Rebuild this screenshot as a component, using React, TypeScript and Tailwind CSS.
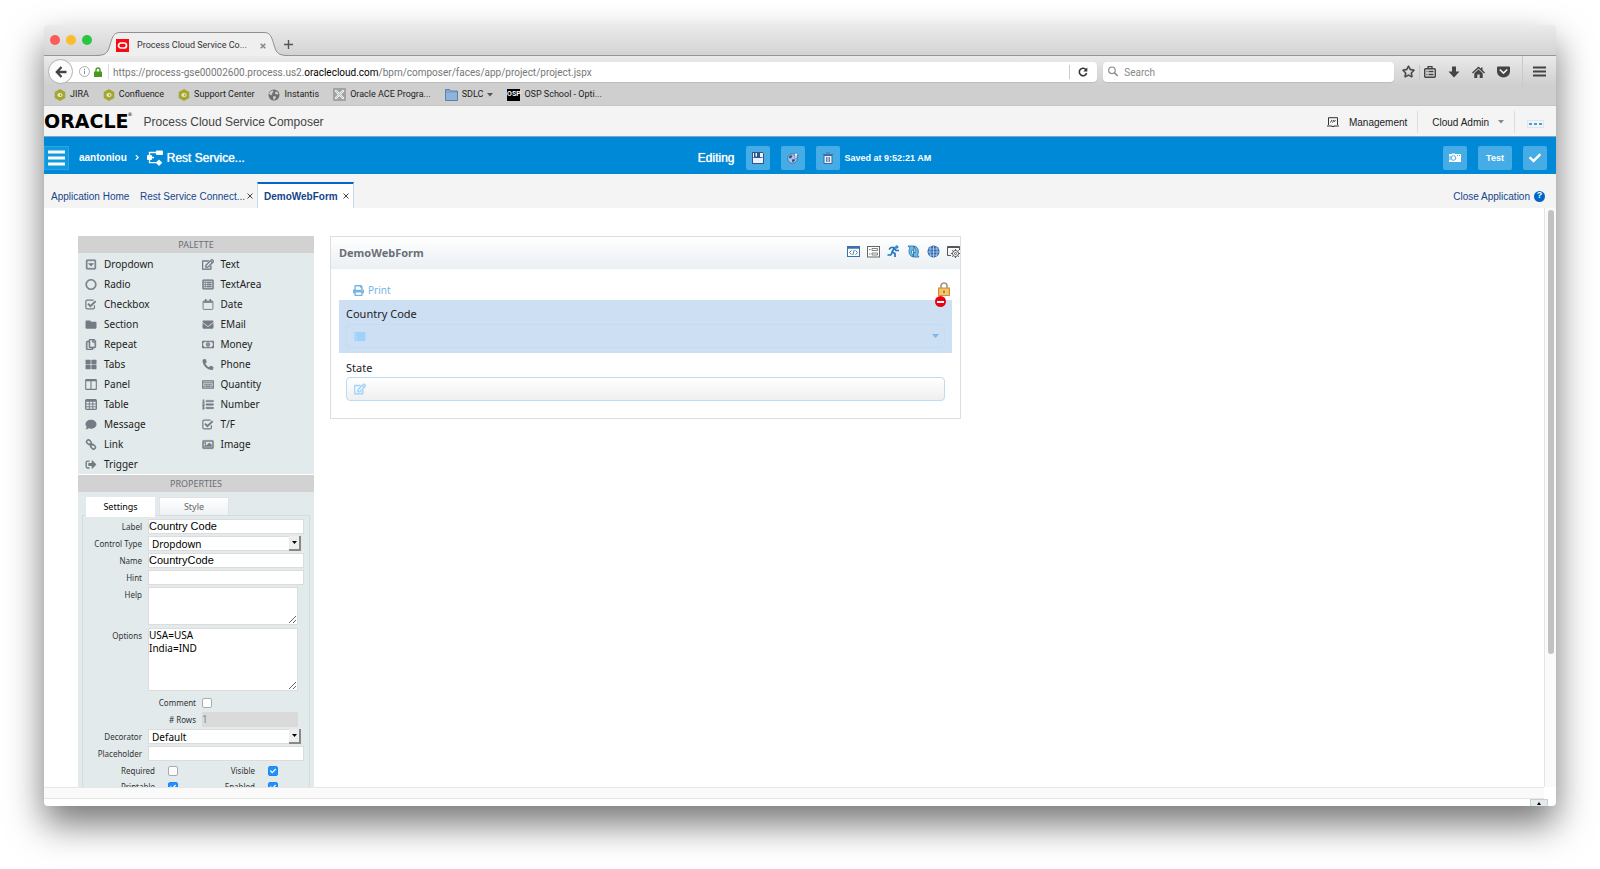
import type { ComponentType, ReactNode } from "react";
import {
  FaCheck,
  FaComment,
  FaEnvelope,
  FaFolder,
  FaListOl,
  FaPhoneAlt,
  FaPrint,
  FaRegCaretSquareDown,
  FaRegCircle,
  FaRegCopy,
  FaRegEdit,
  FaRegImage,
  FaRegKeyboard,
  FaRegListAlt,
  FaRegMoneyBillAlt,
  FaRegStar,
  FaSignOutAlt,
  FaThLarge,
} from "react-icons/fa";

type IconProps = { className?: string };

const CheckSquareIcon = ({ className }: IconProps) => (
  <svg viewBox="0 0 14 12" className={className} fill="none" stroke="currentColor">
    <path d="M11 7v2.5a1.5 1.5 0 0 1-1.500 1.500h-7A1.500 1.500 0 0 1 1 9.500v-7A1.500 1.500 0 0 1 2.500 1H10" strokeWidth="1.400" />
    <path d="M3.500 5 6.300 8 12.500 2" strokeWidth="2.200" />
  </svg>
);

const PanelIcon = ({ className }: IconProps) => (
  <svg viewBox="0 0 13 12" className={className} fill="none" stroke="currentColor">
    <rect x="0.700" y="0.700" width="11.600" height="10.600" rx="0.500" strokeWidth="1.200" />
    <path d="M1 1.700h11" strokeWidth="1.600" />
    <path d="M6.500 2v9" strokeWidth="1.200" />
  </svg>
);

const TableIcon = ({ className }: IconProps) => (
  <svg viewBox="0 0 13 12" className={className} fill="none" stroke="currentColor">
    <rect x="0.700" y="0.700" width="11.600" height="10.600" rx="1" strokeWidth="1.400" />
    <path d="M1 2h11" strokeWidth="2" />
    <path d="M1 5.500h11M1 8.500h11M4.700 2v9M8.400 2v9" />
  </svg>
);

const CalendarIcon = ({ className }: IconProps) => (
  <svg viewBox="0 0 13 13" className={className} fill="none" stroke="currentColor">
    <rect x="0.700" y="2.500" width="11.600" height="9.800" rx="0.600" strokeWidth="1.100" />
    <path d="M1 3.500h11" strokeWidth="2" />
    <path d="M3.800 0v3.500M9.200 0v3.500" strokeWidth="2" />
  </svg>
);

const ChainIcon = ({ className }: IconProps) => (
  <svg viewBox="0 0 12 12" className={className} fill="none" stroke="currentColor">
    <rect x="1" y="1.500" width="5.500" height="4" rx="2" transform="rotate(45 3.700 3.500)" strokeWidth="1.700" />
    <rect x="5.500" y="6.500" width="5.500" height="4" rx="2" transform="rotate(45 8.300 8.500)" strokeWidth="1.700" />
    <path d="m4.500 4.500 3 3" strokeWidth="1.400" />
  </svg>
);

const HexIcon = () => (
  <svg viewBox="0 0 12 12" className="size-3">
    <path d="M6 0 11.300 3v6L6 12 .7 9V3z" fill="#a3a732" />
    <ellipse cx="6" cy="6" rx="2.600" ry="2" fill="#e9ebc4" />
    <circle cx="6.600" cy="6" r="0.900" fill="#a3a732" />
  </svg>
);

const GlobeIcon = () => (
  <svg viewBox="0 0 12 12" className="size-3">
    <circle cx="6" cy="6" r="5.500" fill="#6e6e6e" />
    <path d="M1 4.500C2 2.500 3.500 1.500 5 1.500L5.500 3 4 4l.5 1L3 6.500zM7.500 2.500l2 .5 1 2-1.500.5-2-.5zM5.500 7 8 7.500 7.500 9.500 6 11 5 9z" fill="#cfcfcf" />
  </svg>
);

const CrossBoxIcon = () => (
  <svg viewBox="0 0 13 13" className="size-[13px]">
    <rect width="13" height="13" rx="1" fill="#a2a2a2" />
    <path d="m3 3 7 7M10 3l-7 7" stroke="#f2f2f2" strokeWidth="2.400" strokeLinecap="round" />
    <path d="m3 3 7 7M10 3l-7 7" stroke="#a2a2a2" strokeWidth="0.600" />
  </svg>
);

const BlueFolderIcon = () => (
  <svg viewBox="0 0 13 12" className="h-3 w-[13px]">
    <path d="M.5 11.500V.5h4l1 1.500h7v9.500z" fill="#7fa9d4" stroke="#5c7fa5" />
    <path d="M1 4h11v7H1z" fill="#8fb3da" />
  </svg>
);

const OspIcon = () => (
  <span className="flex h-3 w-[13px] items-center justify-center bg-black text-[7px] leading-none font-bold text-white">
    OSP
  </span>
);

const bookmarks: { label: string; icon: ReactNode; menu?: boolean }[] = [
  { label: "JIRA", icon: <HexIcon /> },
  { label: "Confluence", icon: <HexIcon /> },
  { label: "Support Center", icon: <HexIcon /> },
  { label: "Instantis", icon: <GlobeIcon /> },
  { label: "Oracle ACE Progra...", icon: <CrossBoxIcon /> },
  { label: "SDLC", icon: <BlueFolderIcon />, menu: true },
  { label: "OSP School - Opti...", icon: <OspIcon /> },
];

const TitleBar = () => (
  <div className="flex h-[31px] items-end border-b border-[#959595] bg-linear-to-b from-[#ebebeb] to-[#d3d3d3]">
    <div className="flex gap-1.5 self-center pl-1.5">
      <button aria-label="Close" className="size-2.5 rounded-full bg-[#fc5b57]" />
      <button aria-label="Minimise" className="size-2.5 rounded-full bg-[#fdbb2e]" />
      <button aria-label="Zoom" className="size-2.5 rounded-full bg-[#27c83f]" />
    </div>
    <div className="relative -mb-px ml-1 h-6 w-48">
      <svg viewBox="0 0 192 24" preserveAspectRatio="none" className="absolute inset-0 h-full w-full">
        <path d="M0 23.500c12 0 12-4 15-14C17.500 2 19 .5 25 .5h142c6 0 7.500 1.500 10 9 3 10 3 14 15 14V24H0z" fill="#efefef" />
        <path d="M0 23.500c12 0 12-4 15-14C17.500 2 19 .5 25 .5h142c6 0 7.500 1.500 10 9 3 10 3 14 15 14" fill="none" stroke="#8f8f8f" />
      </svg>
      <div className="relative flex h-full items-center pt-[3px] pr-[22px] pl-5">
        <svg viewBox="0 0 13 13" className="size-[13px]">
          <rect width="13" height="13" fill="#f80b12" />
          <rect x="2.500" y="4" width="8" height="5" rx="2.500" fill="none" stroke="#fff" strokeWidth="1.700" />
        </svg>
        <span className="ml-2 flex-1 whitespace-nowrap text-[#333]">Process Cloud Service Co...</span>
        <button aria-label="Close tab" className="text-[#888]">
          <svg viewBox="0 0 7 7" className="size-1.5">
            <path d="m.8.8 5.400 5.400M6.200.8.8 6.200" stroke="currentColor" strokeWidth="1.800" />
          </svg>
        </button>
      </div>
    </div>
    <button aria-label="New tab" className="-ml-1 mb-1.5 text-[#555]">
      <svg viewBox="0 0 9 9" className="size-[9px]">
        <path d="M4.500 0v9M0 4.500h9" stroke="currentColor" strokeWidth="1.400" />
      </svg>
    </button>
  </div>
);

const NavBar = () => (
  <div className="flex h-[31px] items-center pr-2.5 pl-1 text-[10px] text-[#444]">
    <button aria-label="Back" className="z-10 flex size-[25px] shrink-0 items-center justify-center rounded-full border border-[#b0b0b0] bg-[#fcfcfc]">
      <svg viewBox="0 0 12 12" className="size-3">
        <path d="M6.500 1 1.800 6l4.700 5M2 6h9.500" fill="none" stroke="#444" strokeWidth="2.300" />
      </svg>
    </button>
    <div className="-ml-3 flex h-5 flex-1 items-center rounded-r-sm bg-white pl-[18px] shadow-[0_1px_1px_#bbb]">
      <svg viewBox="0 0 11 11" className="size-[11px]">
        <circle cx="5.500" cy="5.500" r="5" fill="none" stroke="#999" strokeWidth="0.800" />
        <path d="M5.500 4.700v3.300M5.500 2.700v1.200" stroke="#888" />
      </svg>
      <svg viewBox="0 0 8 10" className="ml-1 h-2.5 w-2">
        <path d="M2 5V3a2 2 0 0 1 4 0v2" fill="none" stroke="#47991c" strokeWidth="1.400" />
        <rect y="4.500" width="8" height="5.500" rx="0.600" fill="#47991c" />
      </svg>
      <div className="ml-1.5 h-[15px] w-px bg-[#ddd]" />
      <p className="ml-1 flex-1 truncate pt-px text-[#777]">
        https://process-gse00002600.process.us2.<span className="text-black">oraclecloud.com</span>
        /bpm/composer/faces/app/project/project.jspx
      </p>
      <button aria-label="Reload" className="flex h-3.5 items-center border-l border-[#ccc] pr-[9px] pl-2">
        <svg viewBox="0 0 10 10" className="size-2.5">
          <path d="M8 2.800A3.700 3.700 0 1 0 8.600 6" fill="none" stroke="#333" strokeWidth="1.600" />
          <path d="M9.300.6v4H5.300z" fill="#333" />
        </svg>
      </button>
    </div>
    <label className="ml-1.5 flex h-5 w-[291px] items-center gap-1.5 rounded-sm bg-white px-[5px] shadow-[0_1px_1px_#bbb]">
      <svg viewBox="0 0 11 11" className="size-[11px]">
        <circle cx="4.200" cy="4.200" r="3.500" fill="none" stroke="#888" strokeWidth="1.200" />
        <path d="m6.800 6.800 3.500 3.500" stroke="#888" strokeWidth="1.700" />
      </svg>
      <input aria-label="Search" placeholder="Search" className="w-full pt-px outline-none placeholder:text-[#888]" />
    </label>
    <button aria-label="Bookmark this page" className="ml-2">
      <FaRegStar className="size-[13px] stroke-[20px]" />
    </button>
    <div className="ml-1 h-3.5 w-px bg-[#c6c6c6]" />
    <button aria-label="Show bookmarks" className="ml-1">
      <svg viewBox="0 0 12 12" className="size-3" fill="none" stroke="currentColor">
        <rect x="0.700" y="2.700" width="10.600" height="8.600" rx="1" strokeWidth="1.400" />
        <path d="M4 2.500V.7h4v1.800M2.500 5.500h1M4.500 5.500h5M2.500 8.500h1M4.500 8.500h5" strokeWidth="1.300" />
      </svg>
    </button>
    <button aria-label="Downloads" className="ml-3">
      <svg viewBox="0 0 12 12" className="size-3">
        <path d="M4 .5h4v5h3.500L6 11.500.5 5.500H4z" fill="currentColor" />
      </svg>
    </button>
    <button aria-label="Home" className="ml-3">
      <svg viewBox="0 0 13 12" className="h-3 w-[13px]" fill="currentColor">
        <path d="M6.500.5 0 6.500l.9 1 5.600-5 5.600 5 .9-1L10.500 4V1.500H9v1.300z" />
        <path d="M6.500 3.500 2.300 7.300V12h3V8.500h2.400V12h3V7.300z" />
      </svg>
    </button>
    <button aria-label="Save to Pocket" className="ml-3">
      <svg viewBox="0 0 13 12" className="h-3 w-[13px]">
        <path d="M1 .5h11a1 1 0 0 1 1 1V5.500a6.500 6 0 0 1-13 0v-4a1 1 0 0 1 1-1z" fill="currentColor" />
        <path d="m3.300 4 3.200 3 3.200-3" fill="none" stroke="#eee" strokeWidth="1.700" strokeLinecap="round" />
      </svg>
    </button>
    <div className="ml-3 h-full w-px bg-[#c9c9c9]" />
    <button aria-label="Open menu" className="ml-2.5">
      <svg viewBox="0 0 13 11" className="h-[11px] w-[13px]">
        <path d="M0 1.500h13M0 5.500h13M0 9.500h13" stroke="currentColor" strokeWidth="2" />
      </svg>
    </button>
  </div>
);

const BookmarksBar = () => (
  <nav className="flex h-[18px] items-center gap-3.5 pb-[3px] pl-2.5 text-[#222]">
    {bookmarks.map((bookmark) => (
      <a key={bookmark.label} href="#" className="flex items-center gap-1 whitespace-nowrap">
        {bookmark.icon}
        {bookmark.label}
        {bookmark.menu && (
          <svg viewBox="0 0 6 4" className="h-1 w-1.5">
            <path d="M0 0h6L3 3.500z" fill="#555" />
          </svg>
        )}
      </a>
    ))}
  </nav>
);

const AppHeader = () => (
  <header className="flex h-[31px] items-center border-b border-[#7fa6c6] bg-[#f4f4f4] text-[10px] text-[#222]">
    <span className="relative font-['DejaVu_Sans',sans-serif] text-[19px] leading-none font-bold text-black">
      ORACLE
      <span className="absolute top-0 -right-1 text-[5px] font-normal">®</span>
    </span>
    <h1 className="ml-[15px] pt-0.5 text-xs text-[#444]">Process Cloud Service Composer</h1>
    <div className="ml-auto flex items-center pt-0.5">
      <svg viewBox="0 0 12 10" className="h-2.5 w-3" fill="none" stroke="#333">
        <path d="M1.500 8V.7h9V8" />
        <path d="M0 9h4.500l1 .5h1l1-.5H12" strokeWidth="1.200" />
        <path d="m3.500 5.500 1.500-2.500M5.500 5.500 7 3M7 5l1.500-2" strokeWidth="0.900" />
      </svg>
      <a href="#" className="ml-2.5">Management</a>
      <div className="ml-2.5 h-[22px] w-px bg-[#ddd]" />
      <button className="ml-3.5 flex items-center gap-[9px]">
        Cloud Admin
        <svg viewBox="0 0 6 4" className="h-1 w-1.5">
          <path d="M0 0h6L3 3.500z" fill="#888" />
        </svg>
      </button>
      <div className="ml-2.5 h-[22px] w-px bg-[#ddd]" />
      <button aria-label="More" className="mt-1 mr-3 ml-3 flex gap-0.5 border border-[#dde6ee] px-px py-0.5">
        <i className="h-0.5 w-[3px] bg-[#3ea2e2]" />
        <i className="h-0.5 w-[3px] bg-[#3ea2e2]" />
        <i className="h-0.5 w-[3px] bg-[#3ea2e2]" />
      </button>
    </div>
  </header>
);

const BarButton = ({ label, className, children }: { label: string; className: string; children: ReactNode }) => (
  <button aria-label={label} className={`flex h-6 items-center justify-center rounded-xs bg-[#46ace6] font-bold text-white ${className}`}>
    {children}
  </button>
);

const ActionBar = () => (
  <div className="flex h-[37px] items-center bg-[#0089d6] pt-1 text-xs text-white">
    <div className="flex flex-1 items-center">
      <button aria-label="Menu" className="flex h-6 w-[25px] items-center justify-center border border-[#2fa4e4] bg-[#0d9ade]">
        <svg viewBox="0 0 17 16" className="h-4 w-[17px]">
          <path d="M0 2h17M0 8h17M0 14h17" stroke="#fff" strokeWidth="3" />
        </svg>
      </button>
      <a href="#" className="ml-2.5 text-[10px] font-bold">aantoniou</a>
      <svg viewBox="0 0 5 8" className="ml-2 h-[7px] w-1">
        <path d="m1 1 3 3-3 3" fill="none" stroke="#fff" strokeWidth="1.500" />
      </svg>
      <svg viewBox="0 0 16 16" className="ml-2 size-4">
        <rect x="0" y="5" width="5" height="5" rx="1" fill="#fff" />
        <rect x="9" y="0.500" width="7" height="4.500" rx="1" fill="#fff" />
        <path d="m12 9.500 3.300 3.200L12 16l-3.300-3.300z" fill="#fff" />
        <path d="M2.500 6V2.500H9M2.500 8v4.700H9M5 7.500h2" fill="none" stroke="#fff" strokeWidth="1.300" />
      </svg>
      <span className="ml-1 text-shadow-[0_0_1px_#fff]">Rest Service...</span>
    </div>
    <div className="flex items-center gap-[11px] pl-[38px]">
      <span className="text-shadow-[0_0_1px_#fff]">Editing</span>
      <BarButton label="Save" className="w-6">
        <svg viewBox="0 0 12 12" className="size-3">
          <path d="M0 0h10.500L12 1.500V12H0z" fill="#30558e" />
          <path d="M1 6h10v5H1zM1 1h1v4.500H1zM9.500 1H11v4.500H9.500zM3.500 1h1.500v3.500H3.500zM8 1h1.500v4H8z" fill="#e8f2fc" />
        </svg>
      </BarButton>
      <BarButton label="Publish" className="w-6">
        <svg viewBox="0 0 12 12" className="size-3">
          <circle cx="5.500" cy="6.500" r="4.800" fill="#a9c8e8" stroke="#3c649c" strokeWidth="0.800" />
          <path d="M2 4.500l2-1.500 1.500 1L4 6.500 2 6zM5 7.500l2.500-.5.5 1.500-2 2L5 9.500z" fill="#30558e" />
          <path d="M9 .5 11.500 3.500h-1.500V6.500H8V3.500H6.500z" fill="#e8f2fc" stroke="#30558e" strokeWidth="0.500" />
        </svg>
      </BarButton>
      <div className="flex items-center gap-[5px]">
        <BarButton label="Discard" className="w-6">
          <svg viewBox="0 0 12 12" className="size-3" fill="none" stroke="#3e6499">
            <path d="M2 3.500h8V11.500H2z" fill="#e8f2fc" />
            <path d="M.5 2.500h11M4 1h4M4.500 5v5M6 5v5M7.500 5v5" strokeWidth="0.800" />
          </svg>
        </BarButton>
        <span className="text-[9px] font-bold">Saved at 9:52:21 AM</span>
      </div>
    </div>
    <div className="flex flex-1 items-center justify-end gap-[11px] pr-[9px] text-[9px]">
      <BarButton label="Snapshot" className="w-6">
        <svg viewBox="0 0 12 9" className="h-[9px] w-3">
          <path d="M0 1h3v-.5h3V1h6v8H0z" fill="#fff" />
          <circle cx="4.500" cy="5" r="2.300" fill="#fff" stroke="#46ace6" />
          <path d="M8 2.500h1M10 2.500h1M1 3v4" stroke="#46ace6" />
        </svg>
      </BarButton>
      <BarButton label="Test" className="w-[34px]">Test</BarButton>
      <BarButton label="Accept" className="w-6">
        <FaCheck className="size-3" />
      </BarButton>
    </div>
  </div>
);

const CloseX = () => (
  <svg viewBox="0 0 6 6" className="size-1.5">
    <path d="m.5.5 5 5M5.500.5l-5 5" stroke="#444" strokeWidth="1" />
  </svg>
);

const DocumentTabs = () => (
  <div className="flex h-[34px] items-end bg-[#f4f4f4] pl-[7px] text-[10px] text-[#14448c]">
    <a href="#" className="flex h-[26px] w-[89px] items-center pt-0.5">Application Home</a>
    <div className="flex h-[26px] w-[117px] items-center pt-0.5">
      <a href="#" className="flex-1 whitespace-nowrap">Rest Service Connect...</a>
      <button aria-label="Close Rest Service Connect" className="mr-1">
        <CloseX />
      </button>
    </div>
    <div className="flex h-[26px] items-center gap-[5px] border-x border-t-2 border-x-[#c5d9ec] border-t-[#0066cc] bg-white pr-1 pl-1.5">
      <a href="#" className="font-bold">DemoWebForm</a>
      <button aria-label="Close DemoWebForm">
        <CloseX />
      </button>
    </div>
    <div className="ml-auto flex h-[26px] items-center gap-1 pt-0.5 pr-[11px]">
      <a href="#">Close Application</a>
      <button aria-label="Help" className="flex size-[11px] items-center justify-center rounded-full bg-[#0067c8] text-[9px] font-bold text-white">
        ?
      </button>
    </div>
  </div>
);

type PaletteEntry = { label: string; icon: ComponentType<IconProps>; outline?: boolean };

const leftPalette: PaletteEntry[] = [
  { label: "Dropdown", icon: FaRegCaretSquareDown, outline: true },
  { label: "Radio", icon: FaRegCircle, outline: true },
  { label: "Checkbox", icon: CheckSquareIcon },
  { label: "Section", icon: FaFolder },
  { label: "Repeat", icon: FaRegCopy, outline: true },
  { label: "Tabs", icon: FaThLarge },
  { label: "Panel", icon: PanelIcon },
  { label: "Table", icon: TableIcon },
  { label: "Message", icon: FaComment },
  { label: "Link", icon: ChainIcon },
  { label: "Trigger", icon: FaSignOutAlt },
];

const rightPalette: PaletteEntry[] = [
  { label: "Text", icon: FaRegEdit, outline: true },
  { label: "TextArea", icon: FaRegListAlt, outline: true },
  { label: "Date", icon: CalendarIcon },
  { label: "EMail", icon: FaEnvelope },
  { label: "Money", icon: FaRegMoneyBillAlt, outline: true },
  { label: "Phone", icon: FaPhoneAlt },
  { label: "Quantity", icon: FaRegKeyboard, outline: true },
  { label: "Number", icon: FaListOl, outline: true },
  { label: "T/F", icon: CheckSquareIcon },
  { label: "Image", icon: FaRegImage, outline: true },
];

const PaletteColumn = ({ entries }: { entries: PaletteEntry[] }) => (
  <ul className="w-[118px]">
    {entries.map(({ label, icon: Icon, outline }) => (
      <li key={label}>
        <button className="flex h-5 items-center gap-[7px] text-[#222]">
          <Icon className={`h-[11px] w-3 text-[#747b84] ${outline ? "stroke-[24px]" : ""}`} />
          {label}
        </button>
      </li>
    ))}
  </ul>
);

const PanelTitle = ({ children }: { children: ReactNode }) => (
  <h2 className="flex h-[17px] items-center justify-center bg-[#d2d2d2] text-[9px] text-[#6a6f75]">{children}</h2>
);

const FieldRow = ({ label, id, children }: { label: string; id: string; children: ReactNode }) => (
  <div className="flex items-start gap-1.5">
    <label htmlFor={id} className="w-[59px] pt-0.5 text-right text-[8px] leading-3">
      {label}
    </label>
    {children}
  </div>
);

const TextField = ({ id, value }: { id: string; value?: string }) => (
  <input
    id={id}
    defaultValue={value}
    className="block h-[15px] w-[156px] border border-[#dcdcdc] bg-white font-['Liberation_Sans',Arial,sans-serif] text-[11px] text-black outline-none"
  />
);

const SelectField = ({ id, value }: { id: string; value: string }) => (
  <div className="relative w-[156px]">
    <select id={id} className="block h-[15px] w-[153px] appearance-none border border-[#dcdcdc] bg-white pl-[3px] text-[10px] leading-3 text-black outline-none">
      <option>{value}</option>
    </select>
    <span className="pointer-events-none absolute top-0 right-[3px] flex h-[15px] w-3 items-center justify-center border-r-2 border-b-2 border-[#888] bg-[#eee]">
      <svg viewBox="0 0 5 3" className="h-[3px] w-[5px]">
        <path d="M0 0h5L2.500 3z" />
      </svg>
    </span>
  </div>
);

const CheckField = ({ label, id, checked }: { label: string; id: string; checked?: boolean }) => (
  <>
    <label htmlFor={id} className="text-right text-[8px]">{label}</label>
    <span className="relative size-2.5">
      <input
        type="checkbox"
        id={id}
        defaultChecked={checked}
        className="peer block size-2.5 appearance-none rounded-xs border border-[#aaa] bg-white checked:border-[#1d86f0] checked:bg-[#2590fc]"
      />
      <FaCheck className="pointer-events-none absolute top-0.5 left-0.5 hidden size-1.5 text-white peer-checked:block" />
    </span>
  </>
);

const Properties = () => (
  <section>
    <PanelTitle>PROPERTIES</PanelTitle>
    <div className="px-1 pt-[5px]">
      <div className="flex items-start gap-1 pl-1 text-[9px]">
        <button className="z-10 -mb-0.5 h-5 w-[69px] bg-white text-black">Settings</button>
        <button className="h-[18px] w-[70px] border border-b-0 border-[#dde3e6] bg-linear-to-b from-white to-[#eef2f4] text-[#666]">Style</button>
      </div>
      <div className="flex flex-col gap-0.5 border border-[#d5dcde] pt-[3px] text-[#333]">
        <FieldRow label="Label" id="label">
          <TextField id="label" value="Country Code" />
        </FieldRow>
        <FieldRow label="Control Type" id="control">
          <SelectField id="control" value="Dropdown" />
        </FieldRow>
        <FieldRow label="Name" id="name">
          <TextField id="name" value="CountryCode" />
        </FieldRow>
        <FieldRow label="Hint" id="hint">
          <TextField id="hint" />
        </FieldRow>
        <FieldRow label="Help" id="help">
          <textarea id="help" className="block h-[38px] w-[150px] border border-[#dcdcdc] bg-white outline-none" />
        </FieldRow>
        <div className="pt-px">
          <FieldRow label="Options" id="options">
            <textarea
              id="options"
              defaultValue={"USA=USA\nIndia=IND"}
              className="block h-[63px] w-[150px] border border-[#dcdcdc] bg-white text-[10px] leading-[13px] text-black outline-none"
            />
          </FieldRow>
        </div>
        <div className="grid grid-cols-[113px_96px] items-center gap-x-1.5 gap-y-px pt-0.5">
          <div className="col-span-2 grid h-4 grid-cols-subgrid items-center">
            <CheckField label="Comment" id="comment" />
          </div>
          <label htmlFor="rows" className="text-right text-[8px]"># Rows</label>
          <input id="rows" disabled defaultValue="1" className="h-[15px] bg-[#dadada] text-[10px] text-[#888]" />
        </div>
        <FieldRow label="Decorator" id="decorator">
          <SelectField id="decorator" value="Default" />
        </FieldRow>
        <FieldRow label="Placeholder" id="placeholder">
          <TextField id="placeholder" />
        </FieldRow>
        <div className="grid auto-rows-[16px] grid-cols-[72px_10px_64px_10px] items-center gap-x-[13px]">
          <CheckField label="Required" id="required" />
          <CheckField label="Visible" id="visible" checked />
          <CheckField label="Printable" id="printable" checked />
          <CheckField label="Enabled" id="enabled" checked />
        </div>
      </div>
    </div>
  </section>
);

const FormToolbar = () => (
  <div className="flex gap-[7px] pb-[3px]">
    <button aria-label="Source">
      <svg viewBox="0 0 13 13" className="size-[13px]" fill="none" stroke="#3b72ad">
        <rect x="0.500" y="1.500" width="12" height="10" fill="#fff" />
        <path d="M0 2.500h13" strokeWidth="2.500" />
        <path d="m4.500 5.500-2 2 2 2M8.500 5.500l2 2-2 2M7.200 5l-1.400 5" strokeWidth="0.900" />
      </svg>
    </button>
    <button aria-label="Form layout">
      <svg viewBox="0 0 13 13" className="size-[13px]" fill="none" stroke="#666">
        <rect x="0.500" y="1.500" width="12" height="10.500" fill="#fff" />
        <path d="M2 4.500h1.500M2 9h1.500M5 3.500h5.500v2H5zM5 8h5.500v2H5z" strokeWidth="0.800" />
      </svg>
    </button>
    <button aria-label="Run">
      <svg viewBox="0 0 13 13" className="size-[13px]" fill="none" stroke="#2277bd" strokeWidth="1.700" strokeLinejoin="round">
        <circle cx="9.800" cy="2" r="1.200" fill="#5aa7dd" strokeWidth="1" />
        <path d="M2 4.500 4 2.500h3L9 5.500h3M7 3.500 5 7l3 1.500V12M5 7.500 3.800 10H.5" />
      </svg>
    </button>
    <button aria-label="Refresh">
      <svg viewBox="0 0 13 13" className="size-[13px]" fill="#6cbcec" stroke="#1f6aa5" strokeWidth="0.800">
        <path d="M1 1h6v5.500L5.300 4.800C4 6.500 4.500 8.500 6 10v2C2.500 11 1 7 2.800 3z" />
        <path d="M12 12H6.500V6.500l1.500 1.700c1.300-2 1-4-.5-5.200v-2C11 2 12.500 6 10.500 10z" />
      </svg>
    </button>
    <button aria-label="Web preview">
      <svg viewBox="0 0 13 13" className="size-[13px]">
        <circle cx="6.500" cy="6.500" r="6" fill="#2f68ad" />
        <path d="M2 4h9M1 7h11M2.500 10h8M6.500 1v11M4 1.500c-1.500 3-1.500 7 0 10M9 1.500c1.500 3 1.500 7 0 10" fill="none" stroke="#b9d3ee" strokeWidth="0.800" />
      </svg>
    </button>
    <button aria-label="Form settings">
      <svg viewBox="0 0 13 13" className="size-[13px]" fill="none" stroke="#555">
        <path d="M4 10.500H.5v-9h12V5M.5 2.500h12" />
        <circle cx="8.500" cy="8.500" r="3" fill="#fff" />
        <circle cx="8.500" cy="8.500" r="1" />
        <path d="M8.500 4v1.500M8.500 11.500V13M4 8.500h1.500M11.500 8.500H13M5.300 5.300l1 1M10.700 10.700l1 1M11.700 5.300l-1 1M6.300 10.700l-1 1" />
      </svg>
    </button>
  </div>
);

const FormCanvas = () => (
  <section className="w-[631px] border border-[#dedede] bg-white">
    <div className="flex h-8 items-center justify-between border-b border-[#eceff1] bg-linear-to-b from-white to-[#ebf0f3] pl-2">
      <h2 className="pt-0.5 text-[11px] font-bold text-[#6a6f75]">DemoWebForm</h2>
      <FormToolbar />
    </div>
    <div className="flex h-[31px] items-end justify-between pr-2.5 pl-[22px]">
      <button className="flex h-5 items-center gap-1 text-[10px] text-[#74b5e4]">
        <FaPrint className="size-[11px]" />
        Print
      </button>
      <svg viewBox="0 0 12 14" className="mb-1 h-3.5 w-3" role="img" aria-label="Locked">
        <path d="M3 7V4a3 3 0 0 1 6 0v3" fill="none" stroke="#999" strokeWidth="1.700" />
        <rect x="0.500" y="6" width="11" height="7.500" fill="#f1b552" stroke="#cf9236" />
        <path d="M2 8h8M2 10h8M2 12h8" stroke="#fbe0a8" strokeWidth="0.700" />
        <path d="M6 8.500V11" stroke="#8d6120" strokeWidth="1.400" />
      </svg>
    </div>
    <div className="relative mx-2 bg-[#cddff3] px-[7px] pt-[5px] pb-[5px]">
      <button aria-label="Remove Country Code" className="absolute -top-1 right-1.5 flex size-[11px] items-center justify-center rounded-full bg-[#ed0010]">
        <i className="h-0.5 w-[7px] bg-white" />
      </button>
      <label htmlFor="country" className="mb-0.5 block text-[11px] leading-[17px] text-[#222]">
        Country Code
      </label>
      <div className="relative">
        <select id="country" className="block h-6 w-full appearance-none rounded-sm border border-[#c0def7] outline-none" />
        <svg viewBox="0 0 11 9" className="pointer-events-none absolute top-2 left-2 h-[9px] w-3">
          <path d="M0 0h11v9H0z" fill="#9fd2fb" />
          <path d="M1 2h1.500M1 4.500h1.500M1 7h1.500" stroke="#cddff3" />
        </svg>
        <svg viewBox="0 0 7 4" className="pointer-events-none absolute top-2.5 right-1.5 h-1 w-[7px]">
          <path d="M0 0h7L3.500 4z" fill="#78baea" />
        </svg>
      </div>
    </div>
    <div className="mx-2 px-[7px] pt-1.5 pb-[17px]">
      <label htmlFor="state" className="mb-px block text-[11px] leading-[17px] text-[#222]">
        State
      </label>
      <div className="relative">
        <input id="state" className="block h-6 w-full rounded-sm border border-[#b9ddf6] bg-linear-to-b from-white to-[#efefef] pl-7 text-[11px] outline-none" />
        <FaRegEdit className="pointer-events-none absolute top-1.5 left-2 size-3 stroke-[24px] text-[#9fd2fb]" />
      </div>
    </div>
  </section>
);

export default function App() {
  return (
    <div className="flex h-screen flex-col overflow-hidden bg-white px-11 pt-[25px] pb-[63px] font-['Liberation_Sans',Arial,sans-serif]">
      <div className="flex min-h-0 flex-1 flex-col overflow-hidden rounded-sm bg-white shadow-[0_18px_36px_rgba(0,0,0,0.54)]">
        <div className="font-['Roboto',sans-serif] text-[9px]">
          <TitleBar />
          <div className="border-b border-[#c5c5c5] bg-linear-to-b from-[#eaeaea] to-[#cfcfcf] to-60%">
            <NavBar />
            <BookmarksBar />
          </div>
        </div>
        <AppHeader />
        <ActionBar />
        <DocumentTabs />
        <div className="flex min-h-0 flex-1">
          <main className="flex flex-1 items-start gap-4 overflow-hidden pt-7 pl-[34px] font-['Noto_Sans',sans-serif]">
            <aside className="w-[236px] bg-[#e2eaeb]">
              <section className="border-b border-white">
                <PanelTitle>PALETTE</PanelTitle>
                <div className="flex gap-1 pt-px pl-[7px] text-[10px]">
                  <PaletteColumn entries={leftPalette} />
                  <PaletteColumn entries={rightPalette} />
                </div>
              </section>
              <Properties />
            </aside>
            <FormCanvas />
          </main>
          <div className="w-3 border-l border-[#e3e3e3] bg-[#fafafa] pt-0.5 pl-[3px]">
            <div className="h-[77%] w-1.5 rounded-full bg-[#c1c1c1]" />
          </div>
        </div>
        <div className="mr-3 h-3 border-y border-[#e6e6e6] bg-[#fafafa]" />
        <footer className="flex h-[7px] justify-end pr-2">
          <button aria-label="Expand" className="flex w-[18px] items-center justify-center border border-b-0 border-[#c3d0d5] bg-[#e4eaec]">
            <svg viewBox="0 0 4 3" className="h-[3px] w-1">
              <path d="M0 3h4L2 0z" />
            </svg>
          </button>
        </footer>
      </div>
    </div>
  );
}
